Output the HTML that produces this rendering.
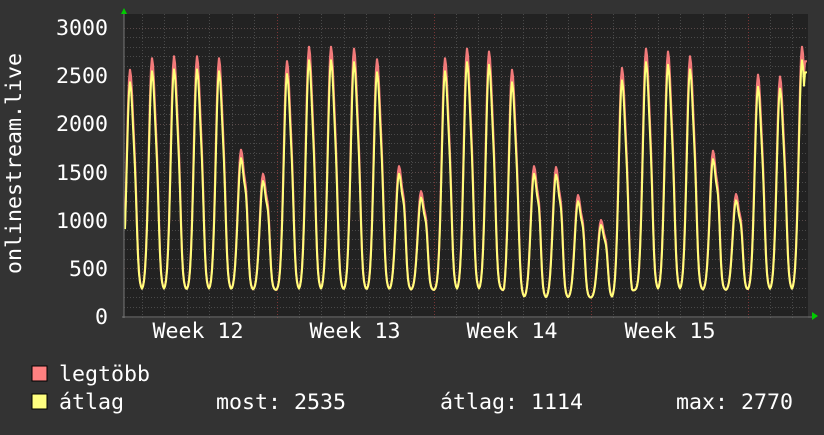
<!DOCTYPE html>
<html><head><meta charset="utf-8"><style>
html,body{margin:0;padding:0;background:#333;}
body{width:824px;height:430px;overflow:hidden;}
svg text{font-family:"DejaVu Sans Mono","Liberation Mono",monospace;fill:#fff;font-size:21.6px;}
</style></head><body>
<svg id="g" width="824" height="430" xmlns="http://www.w3.org/2000/svg">
<rect x="0" y="0" width="824" height="430" fill="#333"/>
<rect x="124" y="14" width="684" height="304" fill="#222"/>
<g id="grid"></g>
<polyline id="red" fill="none" stroke="#f27a7a" stroke-width="2.2" stroke-linejoin="round"/>
<polyline id="yel" fill="none" stroke="#ffff7a" stroke-width="2" stroke-linejoin="round"/>
<line x1="124" y1="12" x2="124" y2="318" stroke="#777" stroke-width="1"/>
<line x1="122" y1="317" x2="812" y2="317" stroke="#777" stroke-width="1"/>
<polygon points="121,14 127,14 124,8" fill="#0c0"/>
<polygon points="812,312 812,320 818,316" fill="#0c0"/>
<g text-anchor="end">
<text x="108" y="35">3000</text>
<text x="108" y="83">2500</text>
<text x="108" y="131">2000</text>
<text x="108" y="180">1500</text>
<text x="108" y="228">1000</text>
<text x="108" y="276">500</text>
<text x="108" y="324">0</text>
</g>
<text transform="translate(21,274) rotate(-90)">onlinestream.live</text>
<g text-anchor="middle">
<text x="198" y="338">Week 12</text>
<text x="355" y="338">Week 13</text>
<text x="512" y="338">Week 14</text>
<text x="670" y="338">Week 15</text>
</g>
<rect x="32" y="366" width="15" height="15" fill="#ff8080" stroke="#000" stroke-width="1"/>
<rect x="32" y="394" width="15" height="15" fill="#ffff80" stroke="#000" stroke-width="1"/>
<text x="59" y="381">legtöbb</text>
<text x="59" y="409">átlag</text>
<text x="216" y="409">most: 2535</text>
<text x="440" y="409">átlag: 1114</text>
<text x="676" y="409">max: 2770</text>
</svg>
<script>
var NS="http://www.w3.org/2000/svg",g=document.getElementById('grid');
function ln(x1,y1,x2,y2,c){var l=document.createElementNS(NS,'line');l.setAttribute('x1',x1);l.setAttribute('y1',y1);l.setAttribute('x2',x2);l.setAttribute('y2',y2);l.setAttribute('stroke',c);l.setAttribute('stroke-width',1);l.setAttribute('stroke-dasharray','1,2');g.appendChild(l);}
var Y0=316.5,S=0.0963;
for(var v=100;v<=3000;v+=100){var y=Math.round(Y0-v*S)+0.5;ln(124,y,808,y,v%500==0?'#5a4a4a':'#4a4a4a');}
for(var k=-7;k<30;k++){var x=Math.round(276.5+22.43*k)+0.5;if(x<125||x>807)continue;ln(x,14,x,318,(k%7==0)?'#7a3535':'#4a4a4a');}
var px=[130,152,174,197,219,241,263,287,309,331,354,377,399,421,445,467,489,512,534,556,578,601,622,646,668,690,713,736,758,780,802];
var pk=[2560,2680,2700,2700,2680,1730,1480,2650,2800,2800,2780,2670,1560,1300,2680,2780,2750,2560,1560,1550,1260,1000,2580,2780,2750,2700,1720,1270,2510,2490,2800];
function val(x,f){var best=0;for(var i=0;i<px.length;i++){var d=x-px[i];var b=(i>=17&&i<=22)?190:270;var P=pk[i]*f-b;var s=d<0?3.2:3.9;var e=P*Math.exp(-d*d/(2*s*s));var sh=(pk[i]<1800?0.3:0.15);e+=P*sh*Math.exp(-(d-5.5)*(d-5.5)/5);if(Math.abs(d)<15)best=Math.max(best,b+e);}return best||250;}
var r=[],yl=[];
for(var x=125;x<=807;x+=1){var a=val(x,1),b=val(x,0.95);if(x>804){a=2650;b=2535;}r.push(x+','+(Y0-a*S).toFixed(1));yl.push(x+','+(Y0-b*S).toFixed(1));}
document.getElementById('red').setAttribute('points',r.join(' '));
document.getElementById('yel').setAttribute('points',yl.join(' '));
</script>
</body></html>
